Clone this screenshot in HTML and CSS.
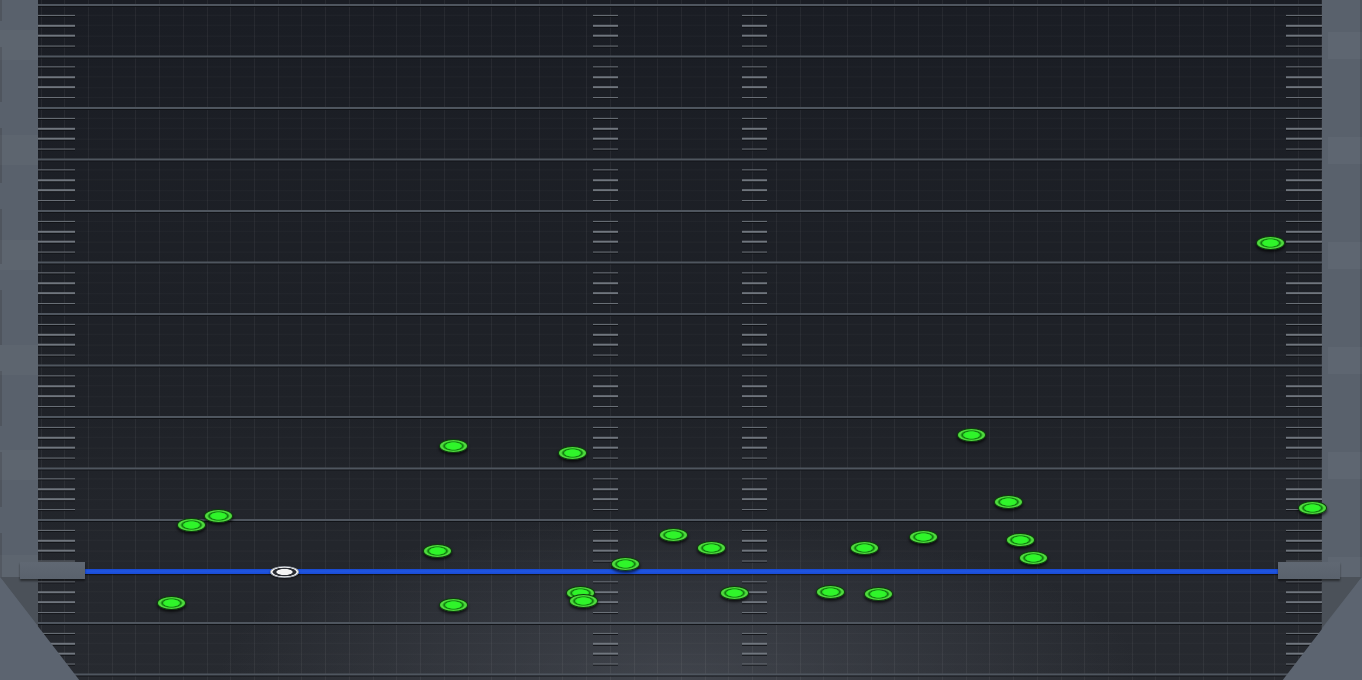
FILE: index.html
```html
<!DOCTYPE html>
<html>
<head>
<meta charset="utf-8">
<link rel="stylesheet" href="styles.css">
</head>
<body>
<div class="app">
  <div class="side side-left"></div>
  <div class="grid">
    <div class="ticks ticks-edge-l"></div>
    <div class="gap gap-a"></div>
    <div class="ticks ticks-mid"></div>
    <div class="gap gap-b"></div>
    <div class="ticks ticks-mid"></div>
    <div class="gap gap-c"></div>
    <div class="ticks ticks-edge-r"></div>
  </div>
  <div class="side side-right"></div>

  <svg class="corner corner-left" width="80" height="104" viewBox="0 0 80 104">
    <polygon points="0,0 38,0 38,49" fill="#4b5159"/>
    <polygon points="0,0 80,104 0,104" fill="#5c6470"/>
  </svg>
  <svg class="corner corner-right" width="80" height="104" viewBox="0 0 80 104">
    <polygon points="40,0 80,0 40,51" fill="#4b5159"/>
    <polygon points="80,0 80,104 0,104" fill="#5c6470"/>
  </svg>

  <div class="baseline"></div>
  <div class="handle handle-left"></div>
  <div class="handle handle-right"></div>

  <div class="dot" style="left:1256px;top:236px"></div>
  <div class="dot" style="left:439px;top:439px"></div>
  <div class="dot" style="left:558px;top:446px"></div>
  <div class="dot" style="left:957px;top:428px"></div>
  <div class="dot" style="left:994px;top:495px"></div>
  <div class="dot" style="left:1298px;top:501px"></div>
  <div class="dot" style="left:177px;top:518px"></div>
  <div class="dot" style="left:204px;top:509px"></div>
  <div class="dot" style="left:423px;top:544px"></div>
  <div class="dot" style="left:659px;top:528px"></div>
  <div class="dot" style="left:697px;top:541px"></div>
  <div class="dot" style="left:850px;top:541px"></div>
  <div class="dot" style="left:909px;top:530px"></div>
  <div class="dot" style="left:1006px;top:533px"></div>
  <div class="dot" style="left:1019px;top:551px"></div>
  <div class="dot" style="left:611px;top:557px"></div>
  <div class="dot" style="left:157px;top:596px"></div>
  <div class="dot" style="left:439px;top:598px"></div>
  <div class="dot" style="left:566px;top:586px"></div>
  <div class="dot" style="left:569px;top:594px"></div>
  <div class="dot" style="left:720px;top:586px"></div>
  <div class="dot" style="left:816px;top:585px"></div>
  <div class="dot" style="left:864px;top:587px"></div>

  <div class="knob" style="left:270px;top:566px"></div>
</div>
</body>
</html>
```

FILE: styles.css
```css
html, body {
  margin: 0;
  padding: 0;
  width: 1362px;
  height: 680px;
  overflow: hidden;
  background: #1d2026;
  font-family: "Liberation Sans", Arial, sans-serif;
}

.app {
  position: relative;
  display: flex;
  width: 1362px;
  height: 680px;
}

.side {
  flex: none;
  height: 100%;
  background-color: #59616c;
}

.side-left {
  width: 38px;
  background-image:
    linear-gradient(to bottom, rgba(255,255,255,0.025) 0 30px, transparent 30px 105px),
    linear-gradient(to bottom, #4f555e 0 55px, transparent 55px 81px);
  background-size: 38px 105px, 2px 81px;
  background-position: 0 30px, 0 47px;
  background-repeat: repeat-y, repeat-y;
}

.side-right {
  width: 40px;
  background-image:
    linear-gradient(to bottom, rgba(255,255,255,0.03) 0 27px, transparent 27px 105px),
    linear-gradient(to right, transparent 0 38px, #50565f 38px 40px);
  background-size: 34px 105px, 40px 100%;
  background-position: right 0 top 32px, 0 0;
  background-repeat: repeat-y, no-repeat;
}

.grid {
  flex: 1;
  display: flex;
  height: 100%;
  background-color: #1e2127;
  background-image:
    linear-gradient(to bottom, #4f565f 0 2px, #111317 2px 3px, transparent 3px),
    linear-gradient(to bottom,
      transparent 0 10.8px, rgba(255,255,255,0.022) 10.8px 11.8px,
      transparent 11.8px 21.1px, rgba(255,255,255,0.022) 21.1px 22.1px,
      transparent 22.1px 31.4px, rgba(255,255,255,0.022) 31.4px 32.4px,
      transparent 32.4px 41.7px, rgba(255,255,255,0.022) 41.7px 42.7px,
      transparent 42.7px),
    repeating-linear-gradient(to right, transparent 0 2.56px, rgba(255,255,255,0.05) 2.56px 3.56px, transparent 3.56px 23.72px),
    radial-gradient(ellipse 36% 24% at 50% 100%, rgba(95,100,110,0.45), rgba(95,100,110,0)),
    linear-gradient(to bottom, #1a1d24 0%, #1f2228 60%, #272a30 100%);
  background-size: 100% 51.5px, 100% 51.5px, 100% 100%, 100% 100%, 100% 100%;
  background-position: 0 4px, 0 4px, 0 0, 0 0, 0 0;
  background-repeat: repeat-y, repeat-y, no-repeat, no-repeat, no-repeat;
}

.ticks {
  flex: none;
  height: 100%;
  background-image: linear-gradient(to bottom,
    transparent 0 10.5px, #70767e 10.5px 12px, #0e1014 12px 13px,
    transparent 13px 20.8px, #70767e 20.8px 22.3px, #0e1014 22.3px 23.3px,
    transparent 23.3px 31.1px, #70767e 31.1px 32.6px, #0e1014 32.6px 33.6px,
    transparent 33.6px 41.4px, #70767e 41.4px 42.9px, #0e1014 42.9px 43.9px,
    transparent 43.9px);
  background-size: 100% 51.5px;
  background-position: 0 4px;
  background-repeat: repeat-y;
}

.ticks-edge-l { width: 37px; }
.ticks-mid { width: 25px; }
.ticks-edge-r { width: 36px; }

.gap { flex: none; height: 100%; }
.gap-a { width: 518px; }
.gap-b { width: 124px; }
.gap-c { width: 519px; }

.corner {
  position: absolute;
  top: 577px;
  display: block;
}
.corner-left { left: 0; }
.corner-right { right: 0; }

.baseline {
  position: absolute;
  left: 85px;
  top: 569px;
  width: 1193px;
  height: 5px;
  background: linear-gradient(to bottom, #1948cc, #1f56e4 40%, #1a4bd2);
  box-shadow: 0 1px 1px rgba(0,0,0,0.5);
}

.handle {
  position: absolute;
  top: 562px;
  height: 17px;
  background: linear-gradient(to bottom, #606873, #5a626d);
  box-shadow: 0 2px 2px rgba(0,0,0,0.45);
}
.handle-left { left: 20px; width: 65px; }
.handle-right { left: 1278px; width: 62px; }

.dot {
  position: absolute;
  width: 27px;
  height: 12px;
  border-radius: 50%;
  border: 1px solid #0d400b;
  background: radial-gradient(ellipse at 50% 50%,
    #2ff52a 0 36%, #27d423 42%, #12780f 47%, #1c9a18 52%,
    #52dc40 60%, #44cc35 82%, #2a9a22 100%);
  box-shadow: 0 2px 3px rgba(0,0,0,0.7);
}

.knob {
  position: absolute;
  width: 27px;
  height: 10px;
  border-radius: 50%;
  border: 1px solid #9aa0a8;
  background: radial-gradient(ellipse at 50% 50%,
    #f4f4f4 0 38%, #2a2d33 46% 58%, #ffffff 66%, #e8e8e8 100%);
  box-shadow: 0 1px 2px rgba(0,0,0,0.6);
}
```
